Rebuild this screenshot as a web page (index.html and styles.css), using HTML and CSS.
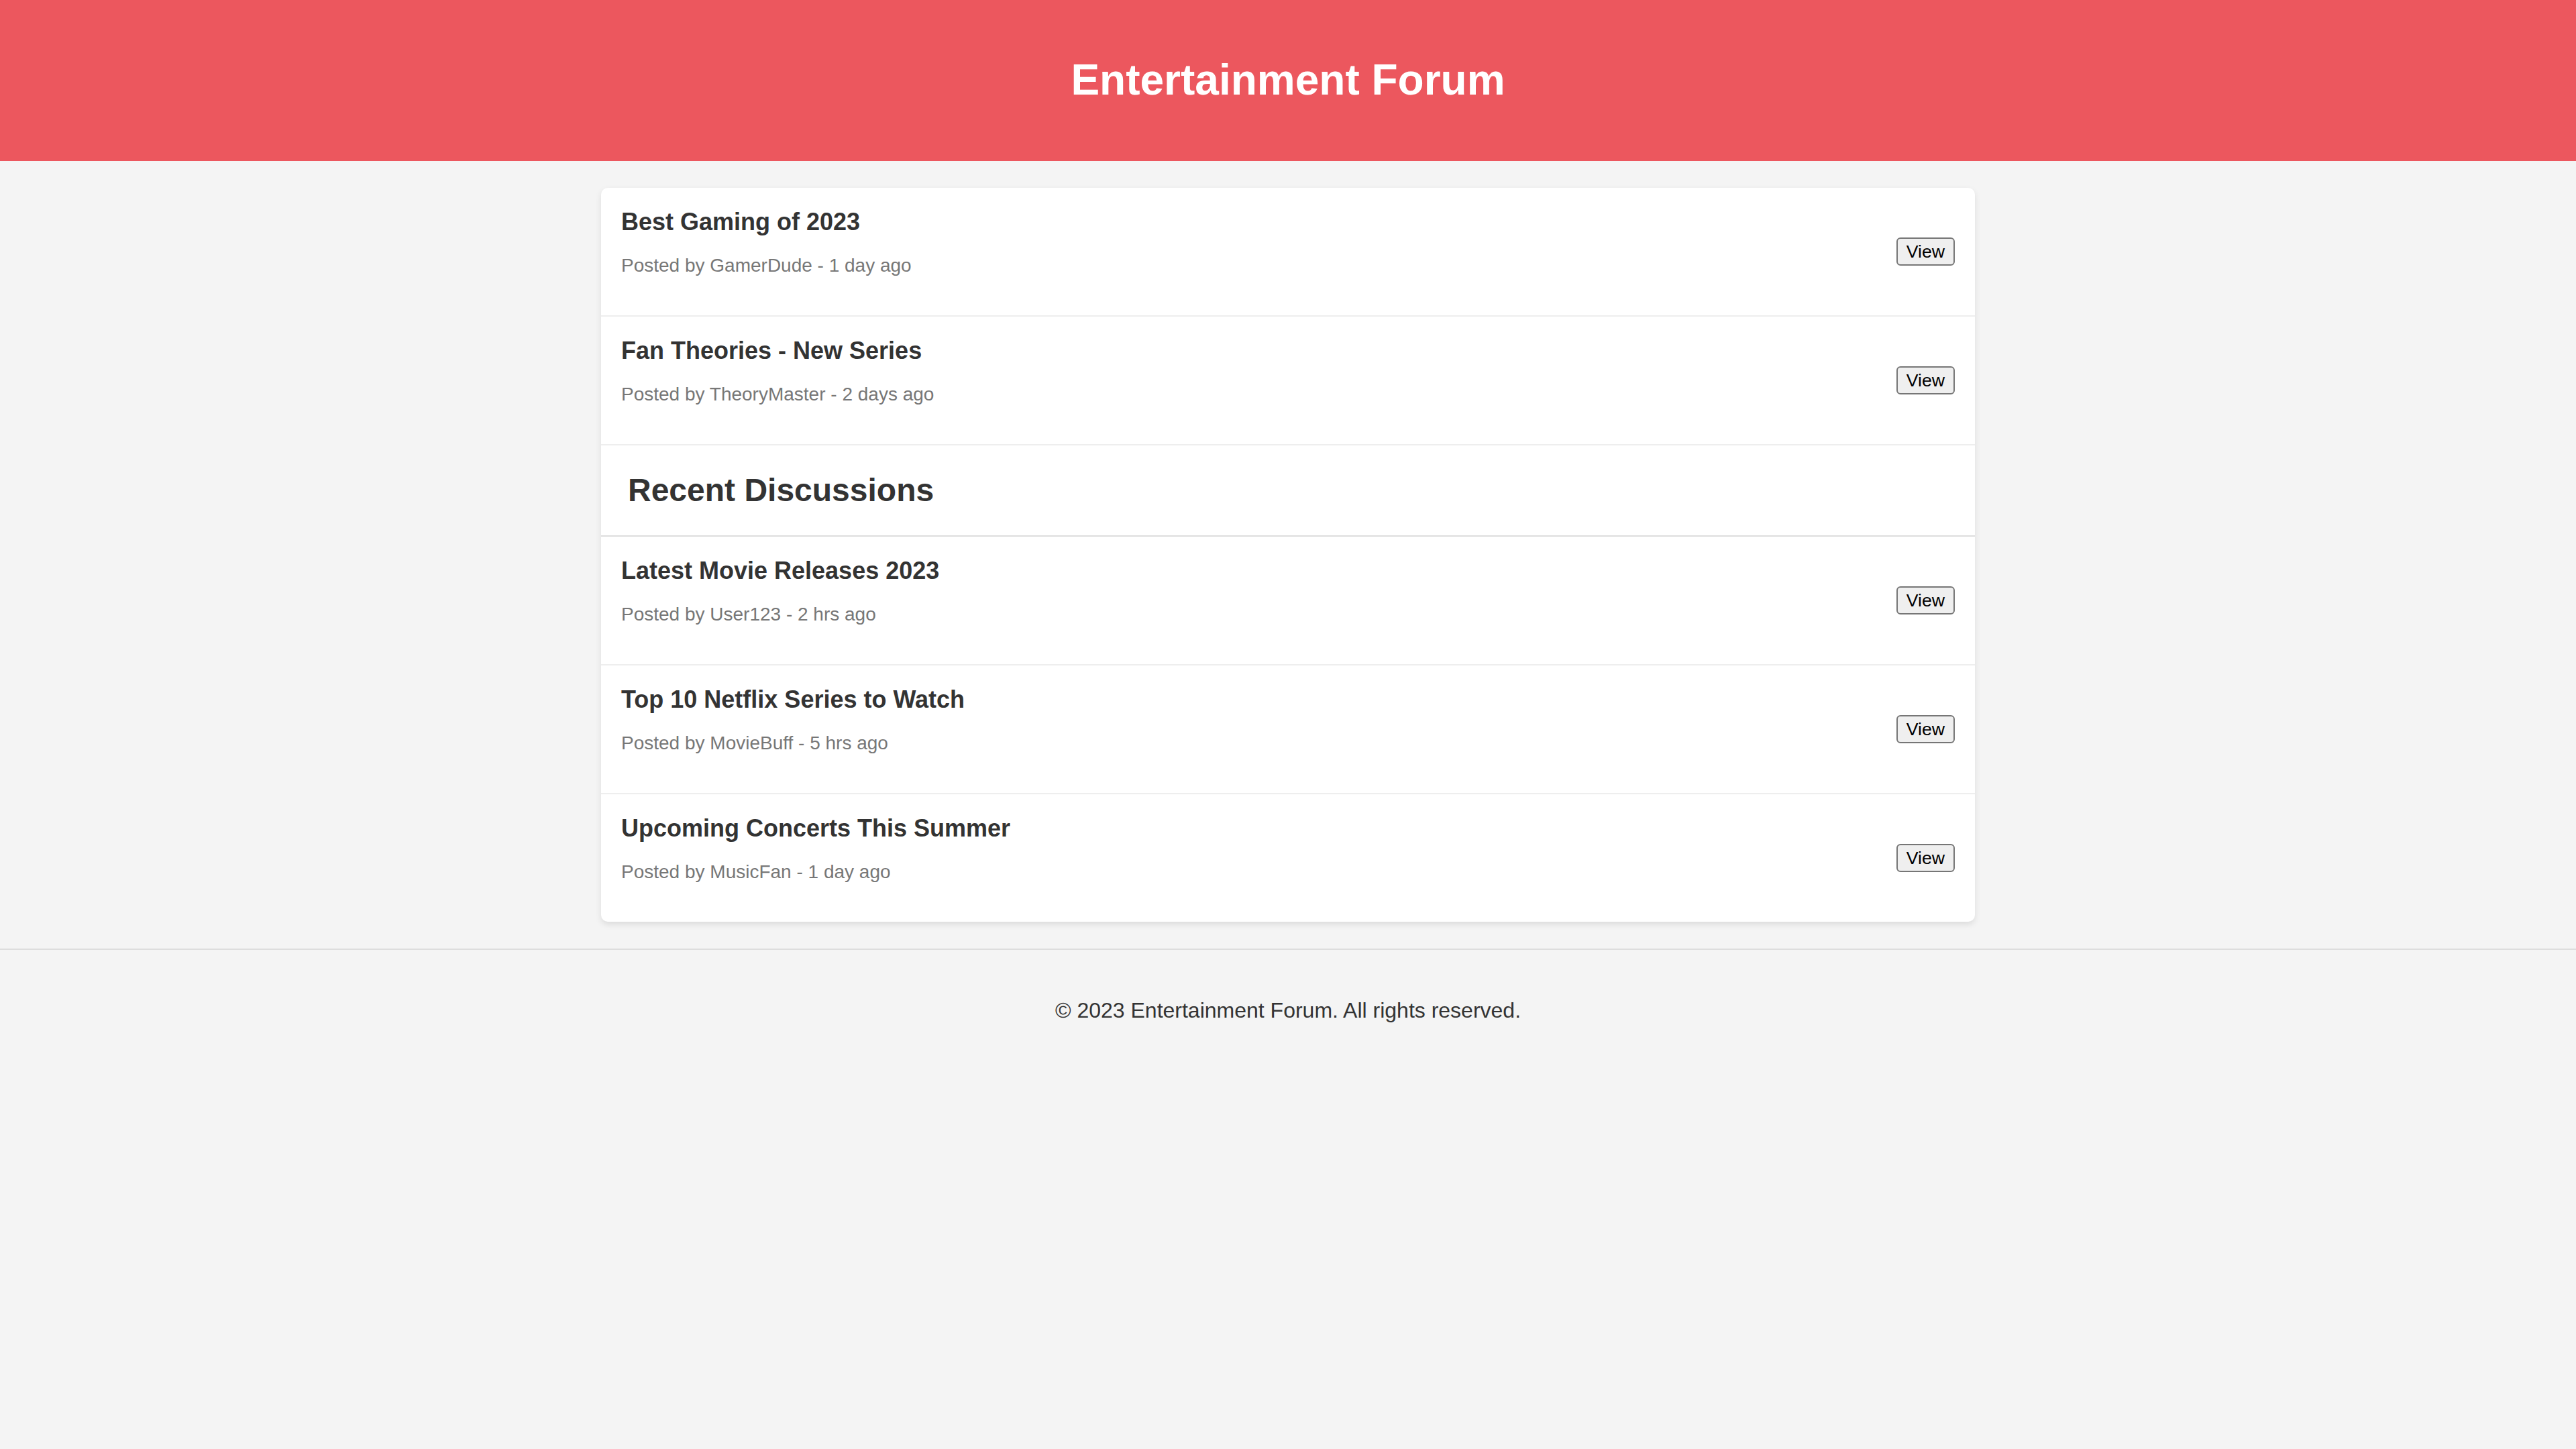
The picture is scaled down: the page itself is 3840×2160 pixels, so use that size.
FILE: index.html
```html
<!DOCTYPE html>
<html lang="en">
<head>
<meta charset="utf-8">
<title>Entertainment Forum</title>
<link rel="stylesheet" href="styles.css">
</head>
<body>
<header class="site-header">
  <h1 class="site-title">Entertainment Forum</h1>
</header>
<main class="board">
  <div class="thread">
    <div class="thread-info">
      <h3 class="thread-title">Best Gaming of 2023</h3>
      <p class="thread-meta">Posted by GamerDude - 1 day ago</p>
    </div>
    <button class="view-btn">View</button>
  </div>
  <div class="thread">
    <div class="thread-info">
      <h3 class="thread-title">Fan Theories - New Series</h3>
      <p class="thread-meta">Posted by TheoryMaster - 2 days ago</p>
    </div>
    <button class="view-btn">View</button>
  </div>
  <h2 class="section-title">Recent Discussions</h2>
  <div class="thread">
    <div class="thread-info">
      <h3 class="thread-title">Latest Movie Releases 2023</h3>
      <p class="thread-meta">Posted by User123 - 2 hrs ago</p>
    </div>
    <button class="view-btn">View</button>
  </div>
  <div class="thread">
    <div class="thread-info">
      <h3 class="thread-title">Top 10 Netflix Series to Watch</h3>
      <p class="thread-meta">Posted by MovieBuff - 5 hrs ago</p>
    </div>
    <button class="view-btn">View</button>
  </div>
  <div class="thread">
    <div class="thread-info">
      <h3 class="thread-title">Upcoming Concerts This Summer</h3>
      <p class="thread-meta">Posted by MusicFan - 1 day ago</p>
    </div>
    <button class="view-btn">View</button>
  </div>
</main>
<footer class="site-footer">
  <p class="footer-text">&copy; 2023 Entertainment Forum. All rights reserved.</p>
</footer>
</body>
</html>
```

FILE: styles.css
```css
html, body {
  margin: 0;
  padding: 0;
}

body {
  background: #f4f4f4;
  font-family: "Liberation Sans", Arial, Helvetica, sans-serif;
  color: #333;
}

.site-header {
  background: #ec575e;
  padding: 82px 0 84px;
  text-align: center;
}

.site-title {
  margin: 0;
  font-size: 64px;
  font-weight: bold;
  color: #fff;
  line-height: 74px;
}

.board {
  width: 2048px;
  margin: 40px auto 40px;
  background: #fff;
  border-radius: 10px;
  box-shadow: 0 4px 10px rgba(0, 0, 0, 0.1);
  overflow: hidden;
}

.thread {
  display: flex;
  justify-content: space-between;
  align-items: center;
  padding: 30px;
  border-bottom: 2px solid #eee;
}

.thread:last-child {
  border-bottom: none;
}

.thread-title {
  margin: 0;
  font-size: 36px;
  font-weight: bold;
  color: #333;
  line-height: 42px;
}

.thread-meta {
  margin: 28px 0;
  font-size: 28px;
  color: #777;
  line-height: 32px;
}

.view-btn {
  font-family: "Liberation Sans", Arial, sans-serif;
  font-size: 26.67px;
  line-height: 30px;
  color: #000;
  background: #efefef;
  border: 2px solid #767676;
  border-radius: 6px;
  padding: 4px 13px;
}

.section-title {
  margin: 0;
  padding: 39px 40px 39px;
  font-size: 48px;
  font-weight: bold;
  color: #333;
  line-height: 56px;
  border-bottom: 2px solid #ddd;
}

.site-footer {
  border-top: 2px solid #ddd;
  padding: 40px;
  text-align: center;
}

.footer-text {
  margin: 32px 0;
  font-size: 32px;
  color: #333;
  line-height: 37px;
}
```
